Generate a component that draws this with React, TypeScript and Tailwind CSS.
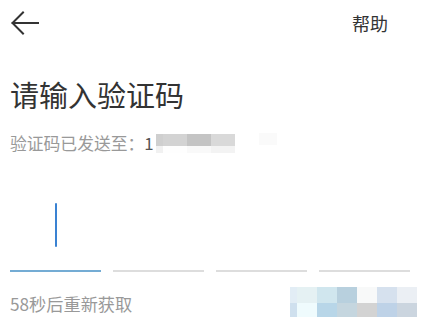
import React from "react";

const topMosaic = [
  { w: 7, c: "#e2edf5", b: "#cfe0ee" },
  { w: 20, c: "#e5f1f3", b: "#effbfd" },
  { w: 20, c: "#d0e6ee", b: "#b8d6e8" },
  { w: 20, c: "#b8d0de", b: "#c5d6df" },
  { w: 20, c: "#f8f9f9", b: "#d3d3d3" },
  { w: 20, c: "#d6e1ee", b: "#bed2e7" },
  { w: 20, c: "#ebeff4", b: "#cbd5df" },
];

const phoneMosaic = [
  { w: 7, c: "#cfcfcf", b: "#f1f1f1" },
  { w: 24, c: "#d3d3d3", b: "#fefefe" },
  { w: 24, c: "#c4c4c4", b: "#f9f9f9" },
  { w: 24, c: "#d9d9d9", b: "#f3f3f3" },
];

export default function App() {
  return (
    <div className="w-[421px] h-[322px] bg-white overflow-hidden font-['Noto_Sans_CJK_SC','Noto_Sans',sans-serif]">
      <div className="flex items-center justify-between h-[46px] pl-[11px] pr-[33px]">
        <svg width="28" height="24" viewBox="0 0 28 24" fill="none">
          <path d="M27.5 12H1.5M12 1.5L1.5 12L12 22.5" stroke="#333" strokeWidth="2" strokeLinecap="square" strokeLinejoin="miter" />
        </svg>
        <span className="text-[18px] leading-[18px] text-[#333]">帮助</span>
      </div>
      <div className="pl-[10px] mt-[33px] text-[29px] leading-[30px] text-[#333]">请输入验证码</div>
      <div className="pl-[10px] mt-[25px] flex items-center text-[16.8px] leading-[17px] text-[#999]">
        <span>验证码已发送至：</span>
        <span className="text-[#555]">1</span>
        <div className="ml-[2px] flex flex-col">
          <div className="flex h-[12px]">
            {phoneMosaic.map((m, i) => (
              <div key={i} style={{ width: m.w, background: m.c }} />
            ))}
          </div>
          <div className="flex h-[7px]">
            {phoneMosaic.map((m, i) => (
              <div key={i} style={{ width: m.w, background: m.b }} />
            ))}
          </div>
        </div>
        <div className="ml-[24px] w-[18px] h-[12px] bg-[#fafafa] self-start mt-[-1px]" />
      </div>
      <div className="mt-[50px] px-[10px] pr-[11px] flex gap-[12px]">
        {[0, 1, 2, 3].map((i) => (
          <div key={i} className="flex-1 flex flex-col items-center">
            <div className="h-[44px] flex items-center">
              {i === 0 && <div className="w-[2px] h-[44px] bg-[#3a82d2] rounded-[1px]" />}
            </div>
            <div className={`mt-[23px] w-full h-[2px] ${i === 0 ? "bg-[#74acd4]" : "bg-[#dddddd]"}`} />
          </div>
        ))}
      </div>
      <div className="mt-[15px] flex items-start pl-[10px] pr-[4px] justify-between">
        <span className="mt-[8px] text-[17.2px] leading-[17px] text-[#999]">58秒后重新获取</span>
        <div className="flex flex-col">
          <div className="flex h-[16px]">
            {topMosaic.map((m, i) => (
              <div key={i} style={{ width: m.w, background: m.c }} />
            ))}
          </div>
          <div className="flex h-[14px]">
            {topMosaic.map((m, i) => (
              <div key={i} style={{ width: m.w, background: m.b }} />
            ))}
          </div>
        </div>
      </div>
    </div>
  );
}
